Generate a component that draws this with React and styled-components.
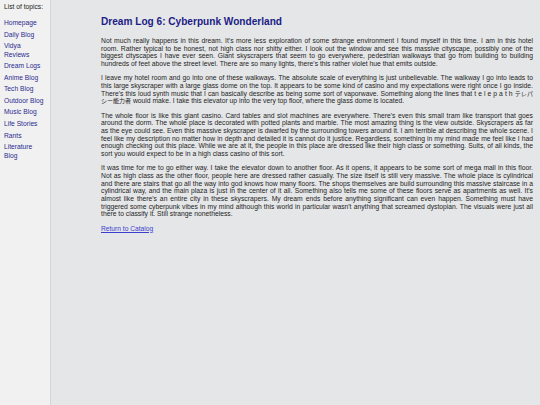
import React from "react";
import styled, { createGlobalStyle } from "styled-components";

const Global = createGlobalStyle`
  html, body { margin: 0; padding: 0; height: 100%; }
  body {
    background: #e5e6e8;
    font-family: "Liberation Sans", Arial, "Noto Sans CJK JP", sans-serif;
  }
  #root { min-height: 100%; }
`;

const Page = styled.div`
  display: flex;
  min-height: 405px;
  width: 540px;
`;

const Sidebar = styled.nav`
  width: 42px;
  flex: 0 0 42px;
  padding: 3px 4px;
  background: #f1f1f1;
  border-right: 1px solid #d3d4d6;
  font-size: 6.7px;
  line-height: 8.4px;
`;

const SideHeading = styled.div`
  color: #222;
  margin-bottom: 7.5px;
`;

const TopicList = styled.ul`
  list-style: none;
  margin: 0;
  padding: 0;
  display: flex;
  flex-direction: column;
  gap: 3.2px;
`;

const TopicLink = styled.a`
  color: #2b2b90;
  text-decoration: none;
`;

const Main = styled.main`
  flex: 1;
  padding: 16px 7px 10px 50px;
  background: #e5e6e8;
`;

const Title = styled.h1`
  margin: 0 0 9.4px;
  font-size: 10.1px;
  line-height: 11.6px;
  font-weight: bold;
  color: #1c1c86;
`;

const Para = styled.p`
  margin: 0 0 6.67px;
  font-size: ${(p) => (p.$justify ? "6.77px" : "6.67px")};
  line-height: 7.67px;
  text-align: ${(p) => (p.$justify ? "justify" : "left")};
  color: #1e1e1e;
`;

const Jp = styled.span`
  font-size: 6px;
  line-height: 6px;
`;

const BackLink = styled.a`
  color: #3c3cd0;
  text-decoration: underline;
`;

const topics = [
  "Homepage",
  "Daily Blog",
  "Vidya Reviews",
  "Dream Logs",
  "Anime Blog",
  "Tech Blog",
  "Outdoor Blog",
  "Music Blog",
  "Life Stories",
  "Rants",
  "Literature Blog",
];

const paragraphs = [
  "Not much really happens in this dream. It's more less exploration of some strange environment I found myself in this time. I am in this hotel room. Rather typical to be honest, not high class nor shitty either. I look out the window and see this massive cityscape, possibly one of the biggest cityscapes I have ever seen. Giant skyscrapers that seem to go everywhere, pedestrian walkways that go from building to building hundreds of feet above the street level. There are so many lights, there's this rather violet hue that emits outside.",
  <>
    I leave my hotel room and go into one of these walkways. The absolute scale
    of everything is just unbelievable. The walkway I go into leads to this
    large skyscraper with a large glass dome on the top. It appears to be some
    kind of casino and my expectations were right once I go inside. There's
    this loud synth music that I can basically describe as being some sort of
    vaporwave. Something along the lines that t e l e p a t h{" "}
    <Jp>テレパシー能力者</Jp> would make. I take this elevator up into the very
    top floor, where the glass dome is located.
  </>,
  "The whole floor is like this giant casino. Card tables and slot machines are everywhere. There's even this small tram like transport that goes around the dorm. The whole place is decorated with potted plants and marble. The most amazing thing is the view outside. Skyscrapers as far as the eye could see. Even this massive skyscraper is dwarfed by the surrounding towers around it. I am terrible at describing the whole scene. I feel like my description no matter how in depth and detailed it is cannot do it justice. Regardless, something in my mind made me feel like I had enough checking out this place. While we are at it, the people in this place are dressed like their high class or something. Suits, of all kinds, the sort you would expect to be in a high class casino of this sort.",
  "It was time for me to go either way. I take the elevator down to another floor. As it opens, it appears to be some sort of mega mall in this floor. Not as high class as the other floor, people here are dressed rather casually. The size itself is still very massive. The whole place is cylindrical and there are stairs that go all the way into god knows how many floors. The shops themselves are build surrounding this massive staircase in a cylindrical way, and the main plaza is just in the center of it all. Something also tells me some of these floors serve as apartments as well. It's almost like there's an entire city in these skyscrapers. My dream ends before anything significant can even happen. Something must have triggered some cyberpunk vibes in my mind although this world in particular wasn't anything that screamed dystopian. The visuals were just all there to classify it. Still strange nonetheless.",
];

export default function App() {
  return (
    <>
      <Global />
      <Page>
        <Sidebar>
          <SideHeading>List of topics:</SideHeading>
          <TopicList>
            {topics.map((t) => (
              <li key={t}>
                <TopicLink href="#">{t}</TopicLink>
              </li>
            ))}
          </TopicList>
        </Sidebar>
        <Main>
          <Title>Dream Log 6: Cyberpunk Wonderland</Title>
          {paragraphs.map((p, i) => (
            <Para key={i} $justify>
              {p}
            </Para>
          ))}
          <Para>
            <BackLink href="#">Return to Catalog</BackLink>
          </Para>
        </Main>
      </Page>
    </>
  );
}
